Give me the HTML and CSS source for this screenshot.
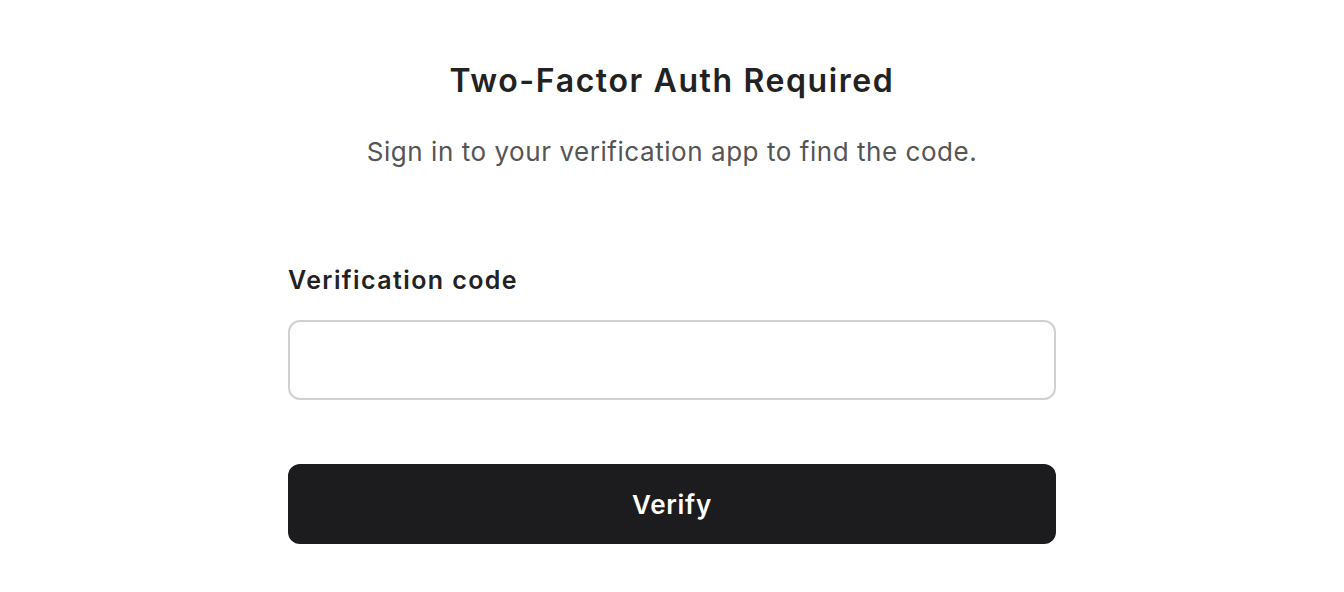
FILE: index.html
```html
<!DOCTYPE html>
<html lang="en">
<head>
  <meta charset="UTF-8" />
  <meta name="viewport" content="width=device-width, initial-scale=1.0" />
  <title>Two-Factor Auth Required</title>
  <link rel="stylesheet" href="styles.css">
</head>
<body>
  <div class="container">
    <h1>Two-Factor Auth Required</h1>
    <p class="subtitle">Sign in to your verification app to find the code.</p>

    <form class="form" onsubmit="return false">
      <label class="label" for="code">Verification code</label>
      <input class="input" id="code" type="text" autocomplete="one-time-code">
      <button class="button" type="submit">Verify</button>
    </form>
  </div>
</body>
</html>
```

FILE: styles.css
```css
* {
  margin: 0; padding: 0; box-sizing: border-box;
}
body {
  font-family: 'Inter', 'Noto Sans', sans-serif;
  background: #fff;
  color: #222;
}
.container {
  width: 768px;
  margin: 0 auto;
  padding-top: 59px;
  text-align: center;
}
h1 {
  font-size: 32px;
  font-weight: 600;
  line-height: 44px;
  letter-spacing: 1.6px;
}
.subtitle {
  margin-top: 33px;
  font-size: 26px;
  line-height: 32px;
  letter-spacing: 0.55px;
  color: #555;
}
.form {
  margin-top: 96px;
  display: flex;
  flex-direction: column;
  text-align: left;
}
.label {
  font-size: 25px;
  font-weight: 600;
  line-height: 32px;
  letter-spacing: 1.4px;
  color: #222;
}
.input {
  margin-top: 24px;
  height: 80px;
  border: 2px solid #d0d0d2;
  border-radius: 12px;
  padding: 0 20px;
  font: inherit;
  font-size: 24px;
  outline: none;
}
.button {
  margin-top: 64px;
  height: 80px;
  border: none;
  border-radius: 12px;
  background: #1c1c1e;
  color: #fff;
  font: inherit;
  font-size: 26px;
  font-weight: 600;
  letter-spacing: 0.7px;
  cursor: pointer;
}
```
